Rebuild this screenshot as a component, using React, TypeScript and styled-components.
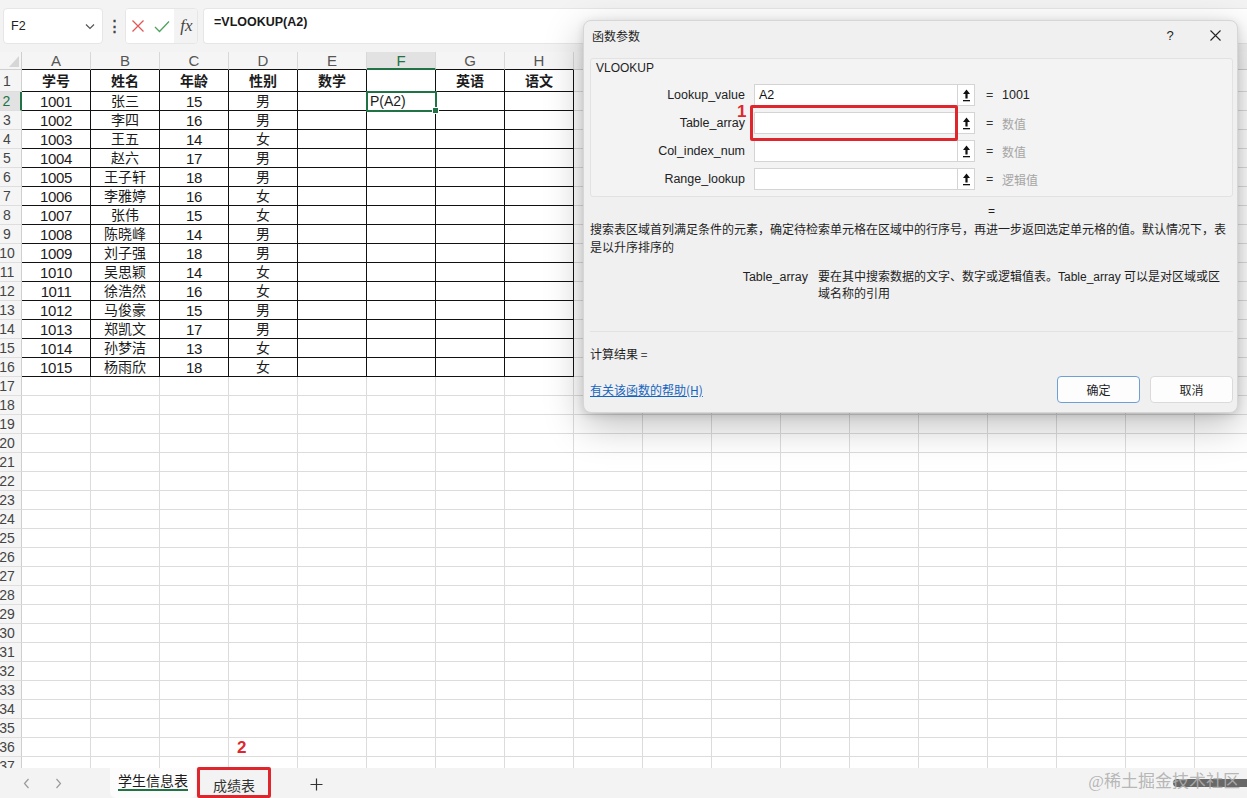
import React from "react";
import styled, { createGlobalStyle, css } from "styled-components";

const GREEN = "#217346";
const RED = "#e0262d";
const GRID = "#dcdcdc";
const HEAD_BG = "#f5f5f5";
const CJK = `"Noto Sans CJK SC", sans-serif`;
const UI = `"Liberation Sans", "Noto Sans CJK SC", sans-serif`;

const GlobalStyle = createGlobalStyle`
  html, body { margin: 0; padding: 0; height: 100%; overflow: hidden; background: #fff; }
  body { font-family: ${UI}; }
  #root { height: 100%; }
  * { box-sizing: border-box; }
`;

/* ---------- page ---------- */
const Page = styled.div`
  position: relative;
  width: 100%;
  height: 100vh;
  display: flex;
  flex-direction: column;
  overflow: hidden;
  background: #fff;
`;

/* ---------- formula bar ---------- */
const boxBase = css`
  background: #fff;
  border: 1px solid #e6e6e6;
  border-radius: 4px;
  height: 36px;
`;

const FormulaBar = styled.div`
  flex: 0 0 52px;
  display: flex;
  align-items: flex-start;
  padding: 8px 0 0 3px;
  background: #f3f3f3;
`;

const NameBox = styled.div`
  ${boxBase};
  width: 100px;
  display: flex;
  align-items: center;
  justify-content: space-between;
  padding: 0 7px 0 7px;
  font-size: 12.5px;
  color: #222;
`;

const Dots = styled.div`
  width: 22px;
  height: 36px;
  display: flex;
  align-items: center;
  justify-content: center;
  color: #444;
  font-size: 15px;
  font-weight: bold;
`;

const ActionGroup = styled.div`
  ${boxBase};
  width: 73px;
  display: flex;
  overflow: hidden;
`;

const ActionBtn = styled.div<{ $shade?: boolean }>`
  flex: 0 0 ${(p) => (p.$shade ? 25 : 24)}px;
  display: flex;
  align-items: center;
  justify-content: center;
  background: ${(p) => (p.$shade ? "#f3f3f3" : "#fff")};
`;

const Fx = styled.span`
  font-family: "Liberation Serif", serif;
  font-style: italic;
  font-size: 17px;
  color: #444;
`;

const FormulaInput = styled.div`
  ${boxBase};
  flex: 1;
  margin-left: 5px;
  border-right: none;
  border-radius: 4px 0 0 4px;
  padding: 6px 0 0 10px;
  font-size: 12.5px;
  line-height: 15px;
  font-weight: bold;
  color: #1a1a1a;
`;

/* ---------- sheet ---------- */
const Sheet = styled.div`
  flex: 1;
  min-height: 0;
  overflow: hidden;
  background: #fff;
`;

const Row = styled.div<{ $h: number }>`
  display: flex;
  height: ${(p) => p.$h}px;
`;

const Corner = styled.div`
  flex: 0 0 22px;
  min-width: 0;
  position: relative;
  background: ${HEAD_BG};
  border-right: 1px solid #cfcfcf;
  border-bottom: 1px solid #cfcfcf;
  &::after {
    content: "";
    position: absolute;
    right: 2px;
    bottom: 2px;
    border-left: 10px solid transparent;
    border-bottom: 11px solid #d6d6d6;
  }
`;

const ColHeader = styled.div<{ $sel?: boolean; $dark?: boolean }>`
  flex: 0 0 69px;
  min-width: 0;
  display: flex;
  align-items: center;
  justify-content: center;
  font-size: 15px;
  line-height: 1;
  color: ${(p) => (p.$sel ? GREEN : "#555")};
  background: ${(p) => (p.$sel ? "#e2e2e2" : HEAD_BG)};
  border-right: 1px solid #d8d8d8;
  border-bottom: ${(p) =>
    p.$sel ? `2px solid ${GREEN}` : `1px solid ${p.$dark ? "#111" : "#cfcfcf"}`};
`;

const RowHeader = styled.div<{ $sel?: boolean }>`
  flex: 0 0 22px;
  width: 22px;
  min-width: 0;
  overflow: visible;
  display: flex;
  align-items: center;
  justify-content: center;
  padding-right: 7px;
  font-size: 14px;
  line-height: 1;
  white-space: nowrap;
  color: ${(p) => (p.$sel ? GREEN : "#444")};
  background: ${(p) => (p.$sel ? "#e2e2e2" : HEAD_BG)};
  border-right: ${(p) => (p.$sel ? `2px solid ${GREEN}` : "1px solid #cfcfcf")};
  border-bottom: 1px solid #dedede;
`;

const Cell = styled.div<{ $dark?: boolean; $bold?: boolean; $left?: boolean; $num?: boolean }>`
  flex: 0 0 69px;
  min-width: 0;
  position: relative;
  display: flex;
  align-items: center;
  justify-content: ${(p) => (p.$left ? "flex-start" : "center")};
  padding-left: ${(p) => (p.$left ? "3px" : "0")};
  border-right: 1px solid ${(p) => (p.$dark ? "#111" : GRID)};
  border-bottom: 1px solid ${(p) => (p.$dark ? "#111" : GRID)};
  font-family: ${UI};
  font-size: ${(p) => (p.$num ? "15px" : "14px")};
  letter-spacing: ${(p) => (p.$num ? "-0.4px" : "0")};
  font-weight: ${(p) => (p.$bold ? "bold" : "normal")};
  line-height: 1;
  color: #1b1b1b;
  white-space: nowrap;
`;

const Selection = styled.div`
  position: absolute;
  top: -1px;
  left: -1px;
  right: -2px;
  bottom: -2px;
  border: 2px solid ${GREEN};
  pointer-events: none;
  z-index: 2;
  &::after {
    content: "";
    position: absolute;
    right: -4px;
    bottom: -4px;
    width: 5px;
    height: 5px;
    background: ${GREEN};
    border: 1px solid #fff;
  }
`;

/* ---------- tab bar ---------- */
const TabBar = styled.div`
  flex: 0 0 30px;
  position: relative;
  display: flex;
  align-items: stretch;
  background: #f3f3f3;
  padding-left: 10px;
`;

const ScrollBtn = styled.div`
  flex: 0 0 32px;
  display: flex;
  align-items: center;
  justify-content: center;
`;

const ActiveTab = styled.div`
  margin-left: 36px;
  flex: 0 0 86px;
  background: #fcfcfc;
  border-radius: 0 0 6px 6px;
  display: flex;
  align-items: center;
  justify-content: center;
`;

const ActiveLabel = styled.span`
  display: inline-block;
  font-family: ${CJK};
  font-size: 14px;
  line-height: 16px;
  color: #1b1b1b;
  padding-bottom: 1px;
  border-bottom: 2px solid ${GREEN};
  margin-bottom: 3px;
`;

const Tab = styled.div`
  position: relative;
  margin-left: 1px;
  flex: 0 0 74px;
  display: flex;
  align-items: center;
  justify-content: center;
  padding-top: 4px;
  font-family: ${CJK};
  font-size: 14px;
  color: #333;
`;

const AddBtn = styled.div`
  margin-left: 30px;
  flex: 0 0 30px;
  display: flex;
  align-items: center;
  justify-content: center;
  padding-top: 3px;
`;

const ScrollThumb = styled.div`
  margin-left: auto;
  margin-top: 11px;
  flex: 0 0 74px;
  align-self: flex-start;
  height: 8px;
  background-color: #686868;
  border-radius: 4px 0 0 4px;
`;

const Watermark = styled.div`
  position: absolute;
  right: 7px;
  top: 4px;
  font-family: "Liberation Serif", "Noto Sans CJK SC", serif;
  font-size: 17px;
  line-height: 20px;
  color: rgba(175, 175, 175, 0.9);
  pointer-events: none;
  z-index: 3;
`;

/* ---------- annotations ---------- */
const RedFrame = styled.div<{ $top: number; $left: number; $w: number; $h: number }>`
  position: absolute;
  top: ${(p) => p.$top}px;
  left: ${(p) => p.$left}px;
  width: ${(p) => p.$w}px;
  height: ${(p) => p.$h}px;
  border: 3px solid ${RED};
  border-radius: 2px;
  pointer-events: none;
  z-index: 5;
`;

const RedMark = styled.div<{ $top: number; $left: number }>`
  position: absolute;
  top: ${(p) => p.$top}px;
  left: ${(p) => p.$left}px;
  font-family: "Liberation Sans", sans-serif;
  font-weight: bold;
  font-size: 17px;
  line-height: 18px;
  color: ${RED};
  z-index: 5;
`;

/* ---------- dialog ---------- */
const Dialog = styled.div`
  position: absolute;
  left: 583px;
  top: 20px;
  width: 655px;
  background: #f0f0f0;
  border: 1px solid #d6d6d6;
  border-radius: 8px;
  box-shadow: 0 12px 38px rgba(0, 0, 0, 0.26), 0 2px 8px rgba(0, 0, 0, 0.12);
  display: flex;
  flex-direction: column;
  color: #1f1f1f;
  z-index: 10;
`;

const TitleBar = styled.div`
  height: 28px;
  display: flex;
  align-items: center;
  padding-left: 8px;
`;

const Title = styled.div`
  flex: 1;
  font-family: ${CJK};
  font-size: 12px;
`;

const TitleBtn = styled.div<{ $w: number; $mr?: number }>`
  width: ${(p) => p.$w}px;
  margin-right: ${(p) => p.$mr || 0}px;
  height: 28px;
  display: flex;
  align-items: center;
  justify-content: center;
  font-size: 13px;
  color: #222;
`;

const Body = styled.div`
  padding: 9px 4px 9px 6px;
  display: flex;
  flex-direction: column;
`;

const Group = styled.div`
  border: 1px solid #e2e2e2;
  border-radius: 3px;
  background: #f3f3f3;
  padding-bottom: 6px;
`;

const GroupTitle = styled.div`
  padding: 1px 0 0 5px;
  font-size: 12px;
  line-height: 16px;
`;

const ParamList = styled.div`
  margin-top: 8px;
  display: flex;
  flex-direction: column;
  gap: 6px;
`;

const ParamRow = styled.div`
  display: flex;
  align-items: center;
  height: 22px;
`;

const ParamLabel = styled.div`
  width: 154px;
  margin-right: 9px;
  text-align: right;
  font-size: 12.5px;
  color: #222;
`;

const Field = styled.div`
  position: relative;
  width: 204px;
  height: 22px;
  background: #fff;
  border: 1px solid #d4d4d4;
  padding-left: 4px;
  display: flex;
  align-items: center;
  font-size: 12.5px;
  color: #111;
`;

const RefBtn = styled.div`
  width: 17px;
  height: 22px;
  background: #fff;
  border: 1px solid #d4d4d4;
  border-left: none;
  display: flex;
  align-items: center;
  justify-content: center;
`;

const Eq = styled.div`
  margin-left: 11px;
  width: 16px;
  font-size: 12.5px;
  color: #333;
`;

const ParamValue = styled.div<{ $muted?: boolean }>`
  font-family: ${UI};
  font-size: ${(p) => (p.$muted ? "12px" : "12.5px")};
  color: ${(p) => (p.$muted ? "#a5a5a5" : "#222")};
`;

const ResultEq = styled.div`
  margin-top: 6px;
  padding-left: 398px;
  font-size: 12px;
  line-height: 16px;
`;

const Description = styled.div`
  margin-top: 1px;
  width: 641px;
  font-family: ${CJK};
  font-size: 12px;
  line-height: 18px;
  color: #1f1f1f;
`;

const ArgHelp = styled.div`
  margin-top: 13px;
  display: grid;
  grid-template-columns: 218px 407px;
  column-gap: 10px;
  font-size: 12px;
  line-height: 17px;
`;

const ArgName = styled.div`
  text-align: right;
  font-family: ${UI};
  font-size: 12.5px;
`;

const ArgText = styled.div`
  font-family: ${UI};
  font-size: 12px;
`;

const Separator = styled.div`
  margin-top: 28px;
  height: 1px;
  background: #e2e2e2;
`;

const CalcResult = styled.div`
  margin-top: 14px;
  font-family: ${CJK};
  font-size: 12px;
  line-height: 16px;
`;

const Footer = styled.div`
  margin-top: 14px;
  height: 27px;
  display: flex;
  align-items: center;
  gap: 10px;
`;

const HelpLink = styled.a`
  flex: 1;
  font-family: ${CJK};
  font-size: 12px;
  color: #1565c0;
  text-decoration: underline;
  cursor: pointer;
`;

const Button = styled.button<{ $primary?: boolean }>`
  width: 83px;
  height: 27px;
  background: #fdfdfd;
  border: 1px solid ${(p) => (p.$primary ? "#6f9fd8" : "#dadada")};
  border-radius: 4px;
  font-family: ${CJK};
  font-size: 12px;
  color: #1f1f1f;
  padding: 0;
`;

/* ---------- icons ---------- */
const Chevron = ({ dir = "down", color = "#555" }: { dir?: "down" | "left" | "right"; color?: string }) => {
  const d =
    dir === "down" ? "M1 1.5 L5 5.5 L9 1.5" : dir === "left" ? "M5.5 1 L1.5 5.5 L5.5 10" : "M1.5 1 L5.5 5.5 L1.5 10";
  const w = dir === "down" ? 10 : 7;
  const h = dir === "down" ? 7 : 11;
  return (
    <svg width={w} height={h} viewBox={`0 0 ${w} ${h}`}>
      <path d={d} fill="none" stroke={color} strokeWidth="1.2" />
    </svg>
  );
};

const CancelIcon = () => (
  <svg width="14" height="14" viewBox="0 0 14 14">
    <path d="M1.5 1.5 L12.5 12.5 M12.5 1.5 L1.5 12.5" stroke="#e05757" strokeWidth="1.3" fill="none" />
  </svg>
);

const CheckIcon = () => (
  <svg width="16" height="13" viewBox="0 0 16 13">
    <path d="M1 7 L5.5 11.5 L15 1.5" stroke="#4fa35e" strokeWidth="1.3" fill="none" />
  </svg>
);

const RefIcon = () => (
  <svg width="9" height="13" viewBox="0 0 9 13">
    <path d="M4.5 0.5 L1 5 H3.4 V9.5 H5.6 V5 H8 Z" fill="#111" />
    <rect x="1" y="11" width="7" height="1.3" fill="#111" />
  </svg>
);

const CloseIcon = () => (
  <svg width="11" height="11" viewBox="0 0 11 11">
    <path d="M0.5 0.5 L10.5 10.5 M10.5 0.5 L0.5 10.5" stroke="#222" strokeWidth="1.1" fill="none" />
  </svg>
);

const PlusIcon = () => (
  <svg width="13" height="13" viewBox="0 0 13 13">
    <path d="M6.5 0.5 V12.5 M0.5 6.5 H12.5" stroke="#333" strokeWidth="1.2" fill="none" />
  </svg>
);

/* ---------- data ---------- */
const COLS = "ABCDEFGHIJKLMNOPQR".split("");
const HEADERS = ["学号", "姓名", "年龄", "性别", "数学", "", "英语", "语文"];
const DATA: [string, string, string, string][] = [
  ["1001", "张三", "15", "男"],
  ["1002", "李四", "16", "男"],
  ["1003", "王五", "14", "女"],
  ["1004", "赵六", "17", "男"],
  ["1005", "王子轩", "18", "男"],
  ["1006", "李雅婷", "16", "女"],
  ["1007", "张伟", "15", "女"],
  ["1008", "陈晓峰", "14", "男"],
  ["1009", "刘子强", "18", "男"],
  ["1010", "吴思颖", "14", "女"],
  ["1011", "徐浩然", "16", "女"],
  ["1012", "马俊豪", "15", "男"],
  ["1013", "郑凯文", "17", "男"],
  ["1014", "孙梦洁", "13", "女"],
  ["1015", "杨雨欣", "18", "女"],
];

const PARAMS = [
  { name: "Lookup_value", value: "A2", result: "1001", muted: false },
  { name: "Table_array", value: "", result: "数值", muted: true },
  { name: "Col_index_num", value: "", result: "数值", muted: true },
  { name: "Range_lookup", value: "", result: "逻辑值", muted: true },
];

const ROWS = Array.from({ length: 37 }, (_, i) => i + 1);

export default function App() {
  return (
    <Page>
      <GlobalStyle />
      <FormulaBar>
        <NameBox>
          <span>F2</span>
          <Chevron />
        </NameBox>
        <Dots>⋮</Dots>
        <ActionGroup>
          <ActionBtn>
            <CancelIcon />
          </ActionBtn>
          <ActionBtn>
            <CheckIcon />
          </ActionBtn>
          <ActionBtn $shade>
            <Fx>fx</Fx>
          </ActionBtn>
        </ActionGroup>
        <FormulaInput>=VLOOKUP(A2)</FormulaInput>
      </FormulaBar>

      <Sheet>
        <Row $h={18}>
          <Corner />
          {COLS.map((c, i) => (
            <ColHeader key={c} $sel={c === "F"} $dark={i < 8}>
              {c}
            </ColHeader>
          ))}
        </Row>
        {ROWS.map((r) => (
          <Row key={r} $h={r === 1 ? 22 : 19}>
            <RowHeader $sel={r === 2}>{r}</RowHeader>
            {COLS.map((c, ci) => {
              const dark = r <= 16 && ci <= 7;
              let text = "";
              let num = false;
              if (r === 1) text = HEADERS[ci] || "";
              else if (r <= 16 && ci < 4) {
                text = DATA[r - 2][ci];
                num = ci === 0 || ci === 2;
              }
              const isF2 = r === 2 && c === "F";
              return (
                <Cell key={c} $dark={dark} $bold={r === 1} $num={num} $left={isF2}>
                  {isF2 ? "P(A2)" : text}
                  {isF2 && <Selection />}
                </Cell>
              );
            })}
          </Row>
        ))}
      </Sheet>

      <TabBar>
        <ScrollBtn>
          <Chevron dir="left" color="#9a9a9a" />
        </ScrollBtn>
        <ScrollBtn>
          <Chevron dir="right" color="#9a9a9a" />
        </ScrollBtn>
        <ActiveTab>
          <ActiveLabel>学生信息表</ActiveLabel>
        </ActiveTab>
        <Tab>
          成绩表
          <RedFrame $top={-1} $left={0} $w={74} $h={31} />
          <RedMark $top={-29} $left={40}>2</RedMark>
        </Tab>
        <AddBtn>
          <PlusIcon />
        </AddBtn>
        <ScrollThumb />
        <Watermark>@稀土掘金技术社区</Watermark>
      </TabBar>

      <Dialog>
        <TitleBar>
          <Title>函数参数</Title>
          <TitleBtn $w={30} $mr={8}>?</TitleBtn>
          <TitleBtn $w={44}>
            <CloseIcon />
          </TitleBtn>
        </TitleBar>
        <Body>
          <Group>
            <GroupTitle>VLOOKUP</GroupTitle>
            <ParamList>
              {PARAMS.map((p, i) => (
                <ParamRow key={p.name}>
                  <ParamLabel>{p.name}</ParamLabel>
                  <Field>
                    {p.value}
                    {i === 1 && (
                      <>
                        <RedFrame $top={-8} $left={-5} $w={208} $h={36} />
                        <RedMark $top={-10} $left={-18}>1</RedMark>
                      </>
                    )}
                  </Field>
                  <RefBtn>
                    <RefIcon />
                  </RefBtn>
                  <Eq>=</Eq>
                  <ParamValue $muted={p.muted}>{p.result}</ParamValue>
                </ParamRow>
              ))}
            </ParamList>
          </Group>
          <ResultEq>=</ResultEq>
          <Description>
            搜索表区域首列满足条件的元素，确定待检索单元格在区域中的行序号，再进一步返回选定单元格的值。默认情况下，表是以升序排序的
          </Description>
          <ArgHelp>
            <ArgName>Table_array</ArgName>
            <ArgText>要在其中搜索数据的文字、数字或逻辑值表。Table_array 可以是对区域或区域名称的引用</ArgText>
          </ArgHelp>
          <Separator />
          <CalcResult>计算结果 =</CalcResult>
          <Footer>
            <HelpLink>有关该函数的帮助(H)</HelpLink>
            <Button $primary>确定</Button>
            <Button>取消</Button>
          </Footer>
        </Body>
      </Dialog>
    </Page>
  );
}
